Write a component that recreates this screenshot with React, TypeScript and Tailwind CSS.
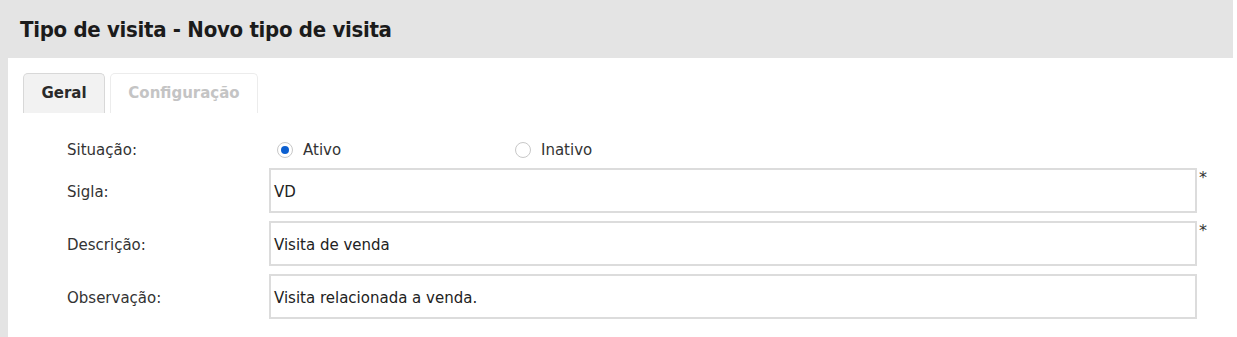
import React from "react";

const font = { fontFamily: '"DejaVu Sans", sans-serif' };

function Radio({ checked, label }: { checked?: boolean; label: string }) {
	return (
		<label className="flex items-center w-[238px] text-[15px] text-[#333]">
			<span className="flex items-center justify-center w-[16px] h-[16px] rounded-full border border-[#c8c8c8] bg-white">
				{checked && <span className="w-[8px] h-[8px] rounded-full bg-[#0b5fd0]" />}
			</span>
			<span className="ml-[10px]">{label}</span>
		</label>
	);
}

function Field({ label, value, required }: { label: string; value: string; required?: boolean }) {
	return (
		<div className="flex items-center h-[45px]">
			<div className="w-[202px] pt-[3px] text-[15px] text-[#333]">{label}</div>
			<div className="relative w-[928px] h-[45px] border-2 border-[#dcdcdc] flex items-center pl-[3px] pt-[3px] text-[15px] text-[#222]">
				{value}
				{required && (
					<span className="absolute -right-[12px] -top-[4px] text-[16px] text-[#333]">*</span>
				)}
			</div>
		</div>
	);
}

export default function App() {
	return (
		<div className="w-[1237px] h-[337px] bg-white overflow-hidden" style={font}>
			<div className="h-[58px] w-[1233px] bg-[#e4e4e4] pl-[20px] pt-[16px]">
				<h1
					className="text-[22px] font-bold text-[#1b1b1b] leading-[28px] tracking-[-0.3px]"
					style={{ fontFamily: '"DejaVu Sans Condensed", "DejaVu Sans", sans-serif' }}
				>
					Tipo de visita - Novo tipo de visita
				</h1>
			</div>
			<div className="flex h-[279px]">
				<div className="w-[8px] bg-[#e4e4e4]" />
				<div className="flex-1">
					<div className="flex gap-[5px] pl-[15px] pt-[15px]">
						<div className="w-[82px] h-[40px] bg-[#f2f2f2] border border-b-0 border-[#d8d8d8] rounded-t-[5px] flex items-center justify-center text-[15px] font-bold text-[#2a2a2a]">
							Geral
						</div>
						<div className="w-[148px] h-[40px] bg-white border border-b-0 border-[#ececec] rounded-t-[5px] flex items-center justify-center text-[15px] font-bold text-[#c4c4c4]">
							Configuração
						</div>
					</div>
					<div className="pl-[59px] pt-[22px]">
						<div className="flex items-center h-[30px] mb-[3px]">
							<div className="w-[202px] text-[15px] text-[#333]">Situação:</div>
							<div className="flex pl-[8px]">
								<Radio checked label="Ativo" />
								<Radio label="Inativo" />
							</div>
						</div>
						<div className="flex flex-col gap-[8px]">
							<Field label="Sigla:" value="VD" required />
							<Field label="Descrição:" value="Visita de venda" required />
							<Field label="Observação:" value="Visita relacionada a venda." />
						</div>
					</div>
				</div>
			</div>
		</div>
	);
}
